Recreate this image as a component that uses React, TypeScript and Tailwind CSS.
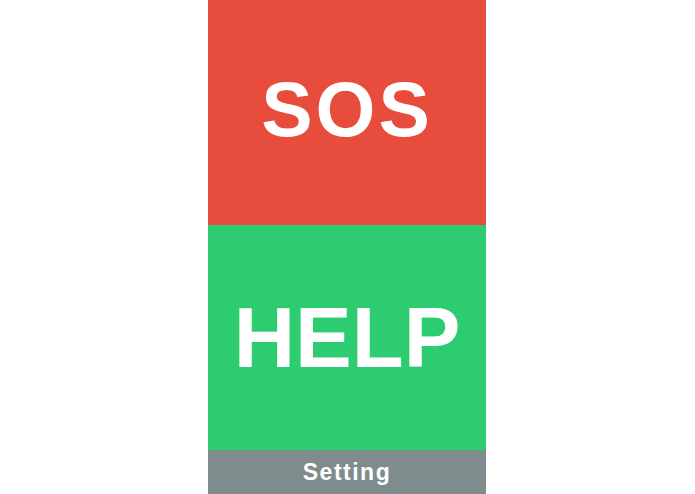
import React from 'react'

const font = { fontFamily: '"Liberation Sans", Arial, sans-serif' }

export default function App() {
  return (
    <div className="flex h-[494px] w-full bg-white pl-[208px]" style={font}>
      <div className="flex w-[278px] flex-col">
        {/* SOS */}
        <button className="flex h-[225px] items-center justify-center bg-[#e74c3c] text-white">
          <span className="text-[77px] font-bold leading-none tracking-[3px] -mt-[7px]">SOS</span>
        </button>
        {/* HELP */}
        <button className="flex h-[225px] items-center justify-center bg-[#2ecc71] text-white">
          <span className="text-[85px] font-bold leading-none">HELP</span>
        </button>
        {/* setting bar */}
        <button className="flex flex-1 items-center justify-center bg-[#7f8c8d] text-white">
          <span className="text-[23px] font-bold leading-none tracking-[1.5px]">Setting</span>
        </button>
      </div>
    </div>
  )
}
